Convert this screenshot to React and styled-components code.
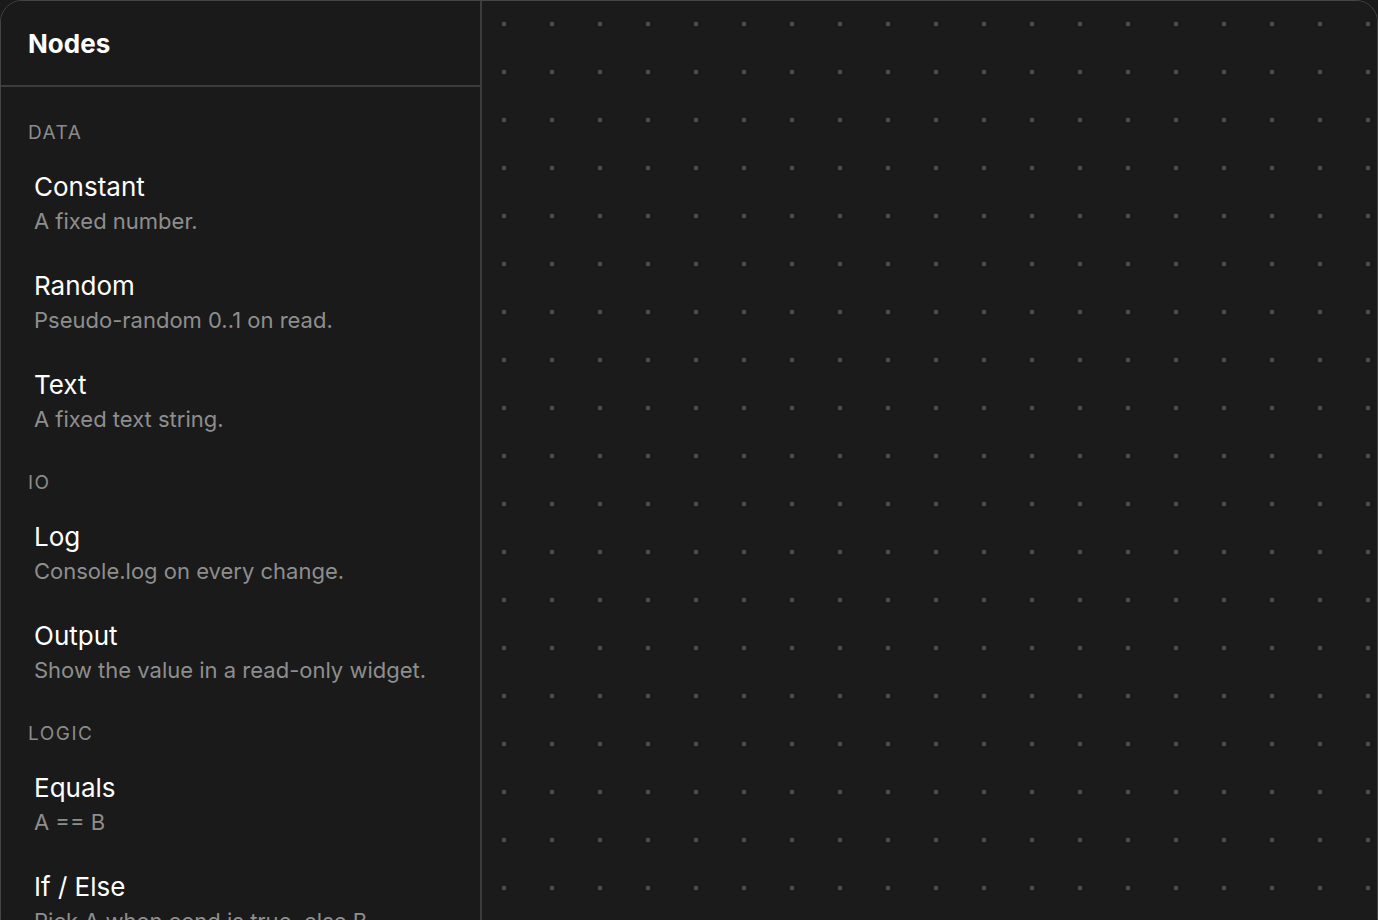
import styled, { createGlobalStyle } from "styled-components";

const GlobalStyle = createGlobalStyle`
  html, body {
    margin: 0;
    padding: 0;
    background: #1a1a1a;
    overflow: hidden;
  }
  body {
    font-family: Inter, "Noto Sans", sans-serif;
    color: #f2f2f2;
  }
`;

const Frame = styled.div`
  display: flex;
  width: 1378px;
  height: 940px;
  box-sizing: border-box;
  border: 1px solid #454545;
  border-radius: 22px;
  overflow: hidden;
  background: #1b1b1b;
`;

const Sidebar = styled.aside`
  width: 479px;
  flex-shrink: 0;
  display: flex;
  flex-direction: column;
  background: #1a1a1a;
  border-right: 2px solid #3c3c3c;
`;

const Header = styled.div`
  height: 84px;
  flex-shrink: 0;
  display: flex;
  align-items: center;
  padding: 0 27px;
  border-bottom: 2px solid #3c3c3c;
  font-size: 26px;
  font-weight: 700;
  color: #ffffff;
`;

const List = styled.div`
  padding: 34px 0 0;
  display: flex;
  flex-direction: column;
  flex-shrink: 0;
`;

const Section = styled.div`
  display: flex;
  flex-direction: column;
  margin-bottom: 20px;
`;

const SectionLabel = styled.div`
  padding: 0 27px;
  font-size: 19px;
  line-height: 24px;
  letter-spacing: 0.08em;
  text-transform: uppercase;
  color: #8b8b8b;
  margin-bottom: 9px;
`;

const Item = styled.div`
  padding: 16px 33px 16px;
  cursor: grab;
`;

const ItemName = styled.div`
  font-size: 26px;
  line-height: 34px;
  color: #ffffff;
`;

const ItemDesc = styled.div`
  margin-top: 2px;
  font-size: 22px;
  line-height: 31px;
  color: #8e8e8e;
  white-space: nowrap;
`;

const Canvas = styled.div`
  flex: 1;
  background-color: #1b1b1b;
  background-image: radial-gradient(circle, #4b4b4b 2px, transparent 2.6px);
  background-size: 48px 48px;
  background-position: -2px -1px;
`;

const sections = [
  {
    label: "Data",
    items: [
      { name: "Constant", desc: "A fixed number." },
      { name: "Random", desc: "Pseudo-random 0..1 on read." },
      { name: "Text", desc: "A fixed text string." },
    ],
  },
  {
    label: "IO",
    items: [
      { name: "Log", desc: "Console.log on every change." },
      { name: "Output", desc: "Show the value in a read-only widget." },
    ],
  },
  {
    label: "Logic",
    items: [
      { name: "Equals", desc: "A == B" },
      { name: "If / Else", desc: "Pick A when cond is true, else B." },
    ],
  },
];

export default function App() {
  return (
    <>
      <GlobalStyle />
      <Frame>
        <Sidebar>
          <Header>Nodes</Header>
          <List>
            {sections.map((s) => (
              <Section key={s.label}>
                <SectionLabel>{s.label}</SectionLabel>
                {s.items.map((it) => (
                  <Item key={it.name}>
                    <ItemName>{it.name}</ItemName>
                    <ItemDesc>{it.desc}</ItemDesc>
                  </Item>
                ))}
              </Section>
            ))}
          </List>
        </Sidebar>
        <Canvas />
      </Frame>
    </>
  );
}
